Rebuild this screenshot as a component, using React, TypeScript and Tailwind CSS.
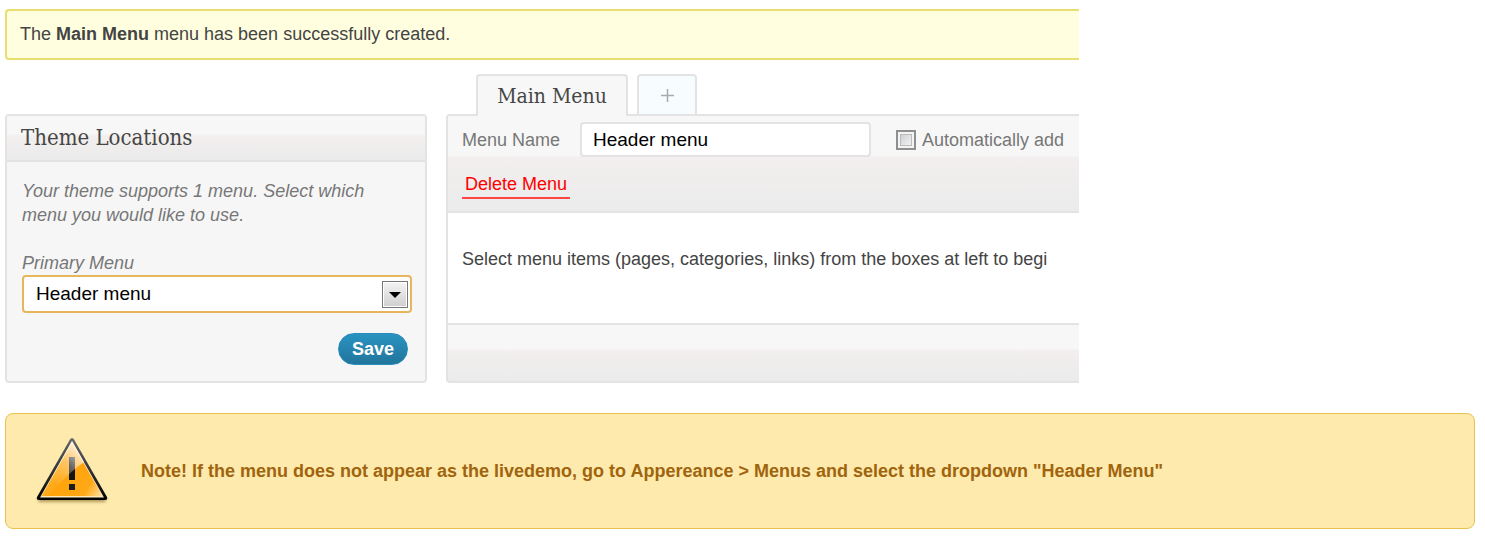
import { useState } from "react"

function WarningIcon() {
  return (
    <svg width="76" height="72" viewBox="0 0 76 72" fill="none" aria-hidden="true" className="shrink-0">
      <defs>
        <linearGradient id="body" x1="10" y1="30" x2="66" y2="64" gradientUnits="userSpaceOnUse">
          <stop offset="0" stopColor="#ffb833" />
          <stop offset="0.3" stopColor="#ffa30a" />
          <stop offset="0.75" stopColor="#ffa816" />
          <stop offset="1" stopColor="#ffe0a0" />
        </linearGradient>
        <linearGradient id="edge" x1="38" y1="4" x2="38" y2="66" gradientUnits="userSpaceOnUse">
          <stop offset="0" stopColor="#666" />
          <stop offset="0.5" stopColor="#333" />
          <stop offset="1" stopColor="#000" />
        </linearGradient>
        <linearGradient id="shine" x1="48" y1="20" x2="22" y2="50" gradientUnits="userSpaceOnUse">
          <stop offset="0" stopColor="#fff" stopOpacity="0.75" />
          <stop offset="0.4" stopColor="#fff" stopOpacity="0.35" />
          <stop offset="1" stopColor="#fff" stopOpacity="0.05" />
        </linearGradient>
        <filter id="soft" x="-10%" y="-100%" width="120%" height="300%">
          <feGaussianBlur stdDeviation="1.5" />
        </filter>
      </defs>
      <rect x="4" y="63" width="68" height="4" rx="2" fill="#7a6220" opacity="0.6" filter="url(#soft)" />
      <path d="M36 4.500Q38 1.500 40 4.500L73 62Q74 65 71 65H5Q2 65 3 62Z" fill="url(#edge)" />
      <path d="M38 6L70 62.500H6Z" fill="#ffe9b8" />
      <path d="M38 8L68.500 61H7.500Z" fill="url(#body)" />
      <rect x="35" y="22" width="6" height="23" fill="#141414" />
      <rect x="35" y="49" width="6" height="6" fill="#1c1c1c" />
      <path d="M38 6L50 27Q34 38 14 61H7Z" fill="url(#shine)" />
    </svg>
  )
}

function Notice() {
  return (
    <p className="rounded-l-[4px] border-y-2 border-l-2 border-[#e8df70] bg-[#ffffe0] px-[13px] py-[11px] text-lg leading-[25px] text-[#444]">
      The <strong>Main Menu</strong> menu has been successfully created.
    </p>
  )
}

function ThemeLocations() {
  const [menu, setMenu] = useState("Header menu")

  return (
    <section className="flex w-[422px] shrink-0 flex-col rounded-[4px] border-2 border-[#e3e3e3] bg-[#f6f6f6]">
      <h2 className="border-b-2 border-[#e3e3e3] bg-linear-to-b from-[#f7f7f7] from-40% via-[#f2efee] via-45% to-[#ebebeb] px-[14px] font-['DejaVu_Serif_Condensed','DejaVu_Serif',serif] text-[22px] leading-[44px] text-[#464646]">
        Theme Locations
      </h2>
      <form className="flex flex-col pt-[17px] pr-[13px] pl-[15px]" onSubmit={(e) => e.preventDefault()}>
        <p className="text-lg leading-6 text-[#777] italic">
          Your theme supports 1 menu. Select which menu you would like to use.
        </p>
        <label htmlFor="primary-menu" className="pt-6 text-lg leading-6 text-[#777] italic">
          Primary Menu
        </label>
        <div className="relative">
          <select
            id="primary-menu"
            value={menu}
            onChange={(e) => setMenu(e.target.value)}
            className="h-[38px] w-full appearance-none rounded-[4px] border-2 border-[#e6b55c] bg-white px-3 text-[19px] text-black"
          >
            <option>Header menu</option>
            <option>Main Menu</option>
          </select>
          <span className="pointer-events-none absolute top-[6px] right-1 flex h-[27px] w-[26px] items-center justify-center border border-[#777] bg-linear-to-b from-[#f4f4f4] to-[#cfcfcf] shadow-[inset_0_0_0_1px_#fff]">
            <svg width="12" height="6" viewBox="0 0 12 6" aria-hidden="true">
              <path d="M0 0H12L6 6Z" fill="#000" />
            </svg>
          </span>
        </div>
        <button
          type="submit"
          className="mt-5 mr-1 h-8 w-[70px] self-end rounded-full border border-[#298cba] bg-linear-to-b from-[#2a93c2] to-[#21759b] text-lg leading-none font-bold text-white"
        >
          Save
        </button>
      </form>
    </section>
  )
}

function MenuEditor() {
  const [name, setName] = useState("Header menu")

  return (
    <section className="min-w-0 flex-1">
      <div className="relative z-10 -mb-[2px] flex gap-[9px] pl-[30px]">
        <button
          type="button"
          className="h-[42px] w-[152px] rounded-t-[4px] border-2 border-b-0 border-[#e3e3e3] bg-[#f7f7f7] font-['DejaVu_Serif_Condensed','DejaVu_Serif',serif] text-[21px] leading-none text-[#464646]"
        >
          Main Menu
        </button>
        <button
          type="button"
          aria-label="Add menu"
          className="flex h-[42px] w-[60px] items-center justify-center rounded-t-[4px] border-2 border-[#e3e3e3] bg-[#f7fcfe] text-[#aaa]"
        >
          <svg width="13" height="13" viewBox="0 0 13 13" aria-hidden="true">
            <path d="M6.500 0V13M0 6.500H13" stroke="currentColor" strokeWidth="1.500" />
          </svg>
        </button>
      </div>
      <div className="rounded-l-[4px] border-y-2 border-l-2 border-[#e3e3e3]">
        <div className="border-b-2 border-[#e3e3e3] bg-linear-to-b from-[#f7f7f7] from-42% via-[#f2efee] via-43% to-[#ebebeb] px-[14px] pt-[6px] pb-[12px]">
          <div className="flex items-center text-lg text-[#777]">
            <label htmlFor="menu-name" className="w-[118px] shrink-0">
              Menu Name
            </label>
            <input
              id="menu-name"
              type="text"
              value={name}
              onChange={(e) => setName(e.target.value)}
              className="h-[35px] w-[291px] min-w-0 rounded-[4px] border-2 border-[#e3e3e3] bg-white px-[11px] text-[19px] text-black"
            />
            <label className="ml-[25px] flex shrink-0 items-center gap-[6px]">
              <input
                type="checkbox"
                className="h-5 w-5 appearance-none border-2 border-[#8e8f8f] bg-linear-to-br from-[#c4c8cc] to-[#fbfbfb] shadow-[inset_0_0_0_2px_#f4f4f4,inset_0_0_0_3px_#bbb]"
              />
              Automatically add
            </label>
          </div>
          <a href="#delete" className="mt-[15px] inline-block border-b-2 border-[#f44] px-[3px] text-lg leading-[25px] text-[#f00]">
            Delete Menu
          </a>
        </div>
        <p className="truncate bg-white px-[14px] pt-[25px] pb-[43px] text-lg leading-[42px] text-[#444] text-clip">
          Select menu items (pages, categories, links) from the boxes at left to begi
        </p>
        <div className="h-[58px] border-t-2 border-[#e3e3e3] bg-linear-to-b from-[#f7f7f7] from-43% via-[#f2efee] via-45% to-[#ebebeb]" />
      </div>
    </section>
  )
}

export default function App() {
  return (
    <main className="bg-white pt-[9px] pr-[10px] pb-[13px] pl-[5px] font-['Liberation_Sans',Arial,sans-serif]">
      <div className="max-w-[1074px]">
        <Notice />
        <div className="flex gap-[19px] pt-[14px]">
          <div className="flex pt-10">
            <ThemeLocations />
          </div>
          <MenuEditor />
        </div>
      </div>
      <aside className="mt-[30px] flex h-[116px] items-center gap-[31px] rounded-lg border border-[#e9c24d] bg-[#fdeaac] px-7 text-lg font-bold text-[#a0640e]">
        <WarningIcon />
        <p>
          Note! If the menu does not appear as the livedemo, go to Appereance &gt; Menus and select the dropdown "Header
          Menu"
        </p>
      </aside>
    </main>
  )
}
